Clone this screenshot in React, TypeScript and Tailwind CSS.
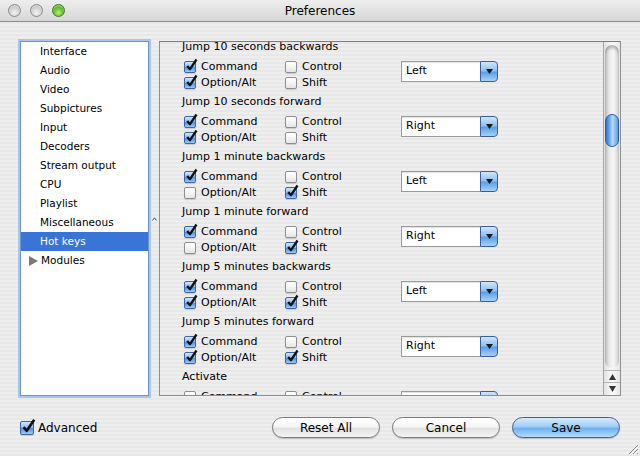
import React from "react";

const groups = [
  { title: "Jump 10 seconds backwards", cmd: true, ctrl: false, opt: true, shift: false, key: "Left" },
  { title: "Jump 10 seconds forward", cmd: true, ctrl: false, opt: true, shift: false, key: "Right" },
  { title: "Jump 1 minute backwards", cmd: true, ctrl: false, opt: false, shift: true, key: "Left" },
  { title: "Jump 1 minute forward", cmd: true, ctrl: false, opt: false, shift: true, key: "Right" },
  { title: "Jump 5 minutes backwards", cmd: true, ctrl: false, opt: true, shift: true, key: "Left" },
  { title: "Jump 5 minutes forward", cmd: true, ctrl: false, opt: true, shift: true, key: "Right" },
  { title: "Activate", cmd: false, ctrl: false, opt: false, shift: false, key: "" },
];

const sections = [
  "Interface",
  "Audio",
  "Video",
  "Subpictures",
  "Input",
  "Decoders",
  "Stream output",
  "CPU",
  "Playlist",
  "Miscellaneous",
  "Hot keys",
];

function CheckBox({ checked, big }: { checked: boolean; big?: boolean }) {
  const size = big ? "w-[14px] h-[14px]" : "w-[12px] h-[12px]";
  return (
    <div className={`relative shrink-0 ${size}`}>
      <div
        className={`w-full h-full rounded-[2px] border ${
          checked
            ? "border-[#3f64a3] bg-[linear-gradient(180deg,#d4e7fb_0%,#8dbdf0_45%,#4f93e3_55%,#9fcaf6_100%)]"
            : "border-[#8e8e8e] bg-[linear-gradient(180deg,#ffffff_0%,#f4f4f4_50%,#e4e4e4_100%)]"
        } shadow-[0_1px_1px_rgba(0,0,0,0.15)]`}
      />
      {checked && (
        <svg
          className="absolute -top-[3px] left-[1px]"
          width={big ? 15 : 13}
          height={big ? 16 : 14}
          viewBox="0 0 13 14"
        >
          <path d="M2.2 8 L5 11.2 L11.5 1.5" stroke="#111" strokeWidth="2.3" fill="none" strokeLinejoin="round" />
        </svg>
      )}
    </div>
  );
}

function Opt({ label, checked }: { label: string; checked: boolean }) {
  return (
    <div className="flex items-center gap-[5px] h-[16px]">
      <CheckBox checked={checked} />
      <span className="text-[11px] leading-[16px]">{label}</span>
    </div>
  );
}

function Popup({ value }: { value: string }) {
  return (
    <div className="flex h-[21px] w-[97px] mt-[2px]">
      <div className="flex-1 bg-white border border-r-0 border-[#9b9b9b] shadow-[inset_0_1px_1px_rgba(0,0,0,0.12)] flex items-center pl-[4px] text-[11px]">
        {value}
      </div>
      <div className="w-[18px] rounded-r-[4px] border border-[#3b5f9e] bg-[linear-gradient(180deg,#d2e6fb_0%,#8ec0f2_45%,#5c9fe8_55%,#a7d2f8_100%)] flex items-center justify-center">
        <svg width="7" height="5" viewBox="0 0 7 5">
          <path d="M0 0 H7 L3.5 5 Z" fill="#1a1a1a" />
        </svg>
      </div>
    </div>
  );
}

function Group({ g }: { g: (typeof groups)[number] }) {
  return (
    <div className="h-[55px]">
      <div className="h-[16px] leading-[16px] pl-[22px] text-[11px]">{g.title}</div>
      <div className="flex mt-[4px] pl-[24px]">
        <div className="w-[101px]">
          <Opt label="Command" checked={g.cmd} />
          <Opt label="Option/Alt" checked={g.opt} />
        </div>
        <div className="w-[116px]">
          <Opt label="Control" checked={g.ctrl} />
          <Opt label="Shift" checked={g.shift} />
        </div>
        <Popup value={g.key} />
      </div>
    </div>
  );
}

function Light({ green }: { green?: boolean }) {
  return (
    <div
      className={`w-[13px] h-[13px] rounded-full border ${
        green
          ? "border-[#3d7a1f] bg-[radial-gradient(circle_at_50%_70%,#b8f27a_0%,#6cc234_45%,#3f8f1c_100%)]"
          : "border-[#8a8a8a] bg-[radial-gradient(circle_at_50%_70%,#f4f4f4_0%,#d2d2d2_50%,#a9a9a9_100%)]"
      } shadow-[inset_0_1px_1px_rgba(255,255,255,0.6)]`}
    />
  );
}

function Button({ label, primary }: { label: string; primary?: boolean }) {
  return (
    <div
      className={`w-[108px] h-[21px] rounded-full border flex items-center justify-center text-[12px] ${
        primary
          ? "border-[#3d5f99] bg-[linear-gradient(180deg,#d5ebfd_0%,#9fcdf6_45%,#6db1ee_55%,#b4dcfb_100%)]"
          : "border-[#7a7a7a] bg-[linear-gradient(180deg,#ffffff_0%,#f6f6f6_45%,#e2e2e2_55%,#f4f4f4_100%)]"
      } shadow-[0_1px_1px_rgba(0,0,0,0.18)]`}
    >
      {label}
    </div>
  );
}

export default function App() {
  return (
    <div className="relative w-[640px] h-[456px] overflow-hidden flex flex-col font-['DejaVu_Sans',sans-serif] text-black bg-[repeating-linear-gradient(180deg,#eeeeee_0px,#eeeeee_2px,#e8e8e8_2px,#e8e8e8_4px)]">
      {/* title bar */}
      <div className="h-[22px] shrink-0 grid grid-cols-[1fr_auto_1fr] items-center border-b border-[#8c8c8c] bg-[linear-gradient(180deg,#eeeeee_0%,#e0e0e0_60%,#d6d6d6_100%)]">
        <div className="flex items-center gap-[9px] pl-[8px]">
          <Light />
          <Light />
          <Light green />
        </div>
        <div className="text-[12px] leading-none">Preferences</div>
        <div />
      </div>

      {/* main */}
      <div className="flex pl-[20px] pt-[19px]">
        <div className="w-[129px] h-[355px] bg-white border border-[#6f92c8] shadow-[0_0_0_2px_#a9c7ec]">
          {sections.map((s) => (
            <div
              key={s}
              className={`h-[19px] leading-[19px] pl-[19px] text-[10.5px] ${
                s === "Hot keys" ? "bg-[#3875d7] text-white" : ""
              }`}
            >
              {s}
            </div>
          ))}
          <div className="h-[19px] flex items-center pl-[8px] gap-[3px] text-[10.5px]">
            <svg width="9" height="10" viewBox="0 0 9 10">
              <path d="M0 0 L9 5 L0 10 Z" fill="#7a7a7a" />
            </svg>
            <span>Modules</span>
          </div>
        </div>

        <div className="w-[10px] flex items-center justify-center">
          <svg width="5" height="4" viewBox="0 0 5 4">
            <path d="M0.5 3.5 L2.5 0.8 L4.5 3.5" stroke="#555" strokeWidth="1" fill="none" />
          </svg>
        </div>

        <div className="w-[462px] h-[355px] border border-[#8f8f8f] border-t-[#7c7c7c] flex">
          <div className="flex-1 overflow-hidden">
            <div className="-mt-[3px]">
              {groups.map((g) => (
                <Group key={g.title} g={g} />
              ))}
            </div>
          </div>
          {/* scrollbar */}
          <div className="w-[17px] flex flex-col border-l border-[#a5a5a5] bg-[linear-gradient(90deg,#e2e2e2_0%,#f7f7f7_45%,#f7f7f7_60%,#e6e6e6_100%)]">
            <div className="flex-1 mx-[1px] mt-[3px] mb-[2px] rounded-full bg-[linear-gradient(90deg,#c4c4c4_0%,#ececec_35%,#f6f6f6_60%,#d4d4d4_100%)] shadow-[inset_0_3px_3px_rgba(0,0,0,0.25)] flex flex-col">
              <div className="mt-[69px] h-[33px] rounded-full border border-[#2d5aa8] bg-[linear-gradient(90deg,#2f6fd2_0%,#7db6f1_35%,#b9dbfa_55%,#5c9ae6_100%)]" />
            </div>
            <div className="h-[12px] border-t border-[#b5b5b5] flex items-center justify-center">
              <svg width="7" height="6" viewBox="0 0 7 6">
                <path d="M0 6 H7 L3.5 0 Z" fill="#333" />
              </svg>
            </div>
            <div className="h-[13px] border-t border-[#b5b5b5] flex items-center justify-center">
              <svg width="7" height="6" viewBox="0 0 7 6">
                <path d="M0 0 H7 L3.5 6 Z" fill="#333" />
              </svg>
            </div>
          </div>
        </div>
      </div>

      {/* bottom */}
      <div className="flex-1 flex items-center px-[20px] pt-[3px]">
        <div className="flex items-center gap-[4px]">
          <CheckBox checked big />
          <span className="text-[12px]">Advanced</span>
        </div>
        <div className="ml-auto flex gap-[12px]">
          <Button label="Reset All" />
          <Button label="Cancel" />
          <Button label="Save" primary />
        </div>
      </div>

      <svg className="absolute right-[1px] bottom-[1px]" width="13" height="13" viewBox="0 0 13 13">
        <path d="M12 3 L3 12 M12 7 L7 12 M12 11 L11 12" stroke="#8a8a8a" strokeWidth="1" />
        <path d="M13 4 L4 13 M13 8 L8 13" stroke="#ffffff" strokeWidth="1" />
      </svg>
    </div>
  );
}
